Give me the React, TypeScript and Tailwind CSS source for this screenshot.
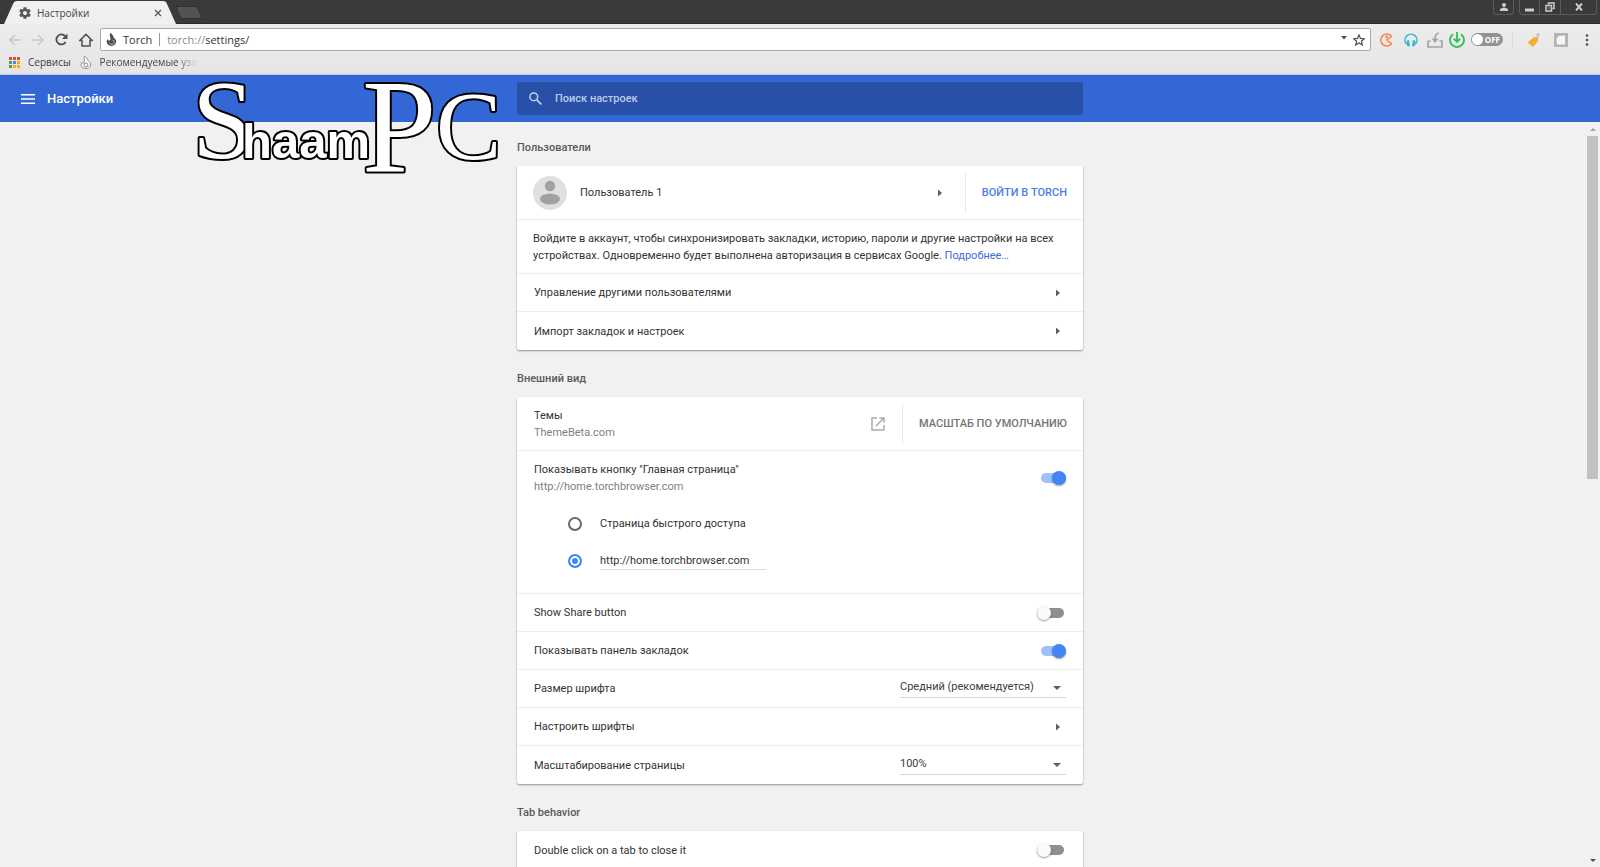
import React, { useState } from "react";

function Chevron() {
  return (
    <svg width="4" height="8" viewBox="0 0 4 8" className="shrink-0" aria-hidden="true">
      <path d="M0 0.5L4 4L0 7.5z" fill="#5f5f5f" />
    </svg>
  );
}

function Toggle({ label, initial }: { label: string; initial: boolean }) {
  const [on, setOn] = useState(initial);
  return (
    <label className={on ? "relative block h-[14px] w-[25px]" : "relative mr-[2px] block h-[14px] w-[27px]"}>
      <input type="checkbox" aria-label={label} checked={on} onChange={() => setOn(!on)} className="peer absolute inset-0 z-10 m-0 cursor-pointer opacity-0" />
      <span className="absolute top-[2px] right-0 left-0 h-[10px] rounded-full bg-[#8f8f8f] peer-checked:bg-[#a0c0f9]" />
      <span className="absolute top-0 left-0 h-[14px] w-[14px] rounded-full bg-[#fafafa] shadow-[0_1px_2px_rgba(0,0,0,0.4)] peer-checked:right-0 peer-checked:left-auto peer-checked:bg-[#4285f4]" />
    </label>
  );
}

function Select({ label, options }: { label: string; options: string[] }) {
  return (
    <div className="relative w-[166px]">
      <select aria-label={label} className="block h-[19px] w-full appearance-none border-b border-[#d4d4d4] bg-transparent p-0 pb-[2px] text-[11px] leading-4 text-[#3c3c3c] outline-none">
        {options.map((o) => (
          <option key={o}>{o}</option>
        ))}
      </select>
      <svg width="8" height="4" viewBox="0 0 8 4" className="pointer-events-none absolute top-[7px] right-[5px]" aria-hidden="true">
        <path d="M0 0h8L4 4z" fill="#5f5f5f" />
      </svg>
    </div>
  );
}

function Section({ title, children }: { title: string; children: React.ReactNode }) {
  return (
    <section>
      <h2 className="mb-[10px] text-[11px] leading-4 font-medium text-[#5a5a5a]">{title}</h2>
      <div className="divide-y divide-[#eeeeee] rounded-xs bg-white shadow-[0_1px_2px_rgba(0,0,0,0.4)]">{children}</div>
    </section>
  );
}

function Row({ label, children }: { label: string; children: React.ReactNode }) {
  return (
    <div className="flex h-[38px] items-center justify-between px-[17px]">
      <span>{label}</span>
      {children}
    </div>
  );
}

function LinkRow({ label }: { label: string }) {
  return (
    <button className="flex h-[38px] w-full items-center justify-between pr-[23px] pl-[17px] text-left">
      {label}
      <Chevron />
    </button>
  );
}

function WordMark() {
  return (
    <svg width="312" height="100" viewBox="0 0 312 100" className="pointer-events-none absolute top-[76px] left-[192px] z-20" role="img" aria-label="ShaamPC">
      <g fill="#fff" stroke="#000" strokeWidth="4" strokeLinejoin="round" paintOrder="stroke">
        <text x="244" y="83" fontFamily="Liberation Serif, serif" fontSize="98">C</text>
        <text x="170" y="95" fontFamily="Liberation Serif, serif" fontSize="134">P</text>
        <text x="0" y="82" fontFamily="Liberation Serif, serif" fontSize="112">S</text>
        <text x="50" y="82" fontFamily="Liberation Sans, sans-serif" fontWeight="bold" fontSize="49">haam</text>
      </g>
    </svg>
  );
}

function TitleBar() {
  return (
    <div className="flex h-6 items-end justify-between border-b border-[#2a2a2a] bg-[#3a3a3a]">
      <div className="flex items-end">
        <div className="relative -mb-px ml-1 flex h-[23px] w-[172px] items-center pr-[14px] pl-[14px]">
          <svg viewBox="0 0 172 23" className="absolute inset-0 h-full w-full" aria-hidden="true">
            <path d="M0 23L9 3Q10 0 13 0H159Q162 0 163 3L172 23z" fill="#f0f0f0" />
          </svg>
          <svg viewBox="0 0 24 24" width="14" height="14" className="relative" aria-hidden="true">
            <path fill="#555" d="M19.43 12.98c.04-.32.07-.64.07-.98s-.03-.66-.07-.98l2.11-1.65c.19-.15.24-.42.12-.64l-2-3.46c-.12-.22-.39-.3-.61-.22l-2.49 1c-.52-.4-1.08-.73-1.69-.98l-.38-2.65C14.46 2.18 14.25 2 14 2h-4c-.25 0-.46.18-.49.42l-.38 2.65c-.61.25-1.17.59-1.69.98l-2.49-1c-.23-.09-.49 0-.61.22l-2 3.46c-.13.22-.07.49.12.64l2.11 1.65c-.04.32-.07.65-.07.98s.03.66.07.98l-2.11 1.65c-.19.15-.24.42-.12.64l2 3.46c.12.22.39.3.61.22l2.49-1c.52.4 1.08.73 1.69.98l.38 2.65c.03.24.24.42.49.42h4c.25 0 .46-.18.49-.42l.38-2.65c.61-.25 1.17-.59 1.69-.98l2.49 1c.23.09.49 0 .61-.22l2-3.46c.12-.22.07-.49-.12-.64l-2.11-1.65zM12 15.5c-1.93 0-3.5-1.57-3.5-3.5s1.57-3.5 3.5-3.5 3.5 1.57 3.5 3.5-1.57 3.5-3.5 3.5z" />
          </svg>
          <span className="relative ml-[5px] flex-1 text-[10px] leading-4 text-[#444]">Настройки</span>
          <button aria-label="Закрыть вкладку" className="relative">
            <svg width="8" height="8" viewBox="0 0 8 8" aria-hidden="true">
              <path d="M1 1l6 6M7 1L1 7" stroke="#555" strokeWidth="1.3" />
            </svg>
          </button>
        </div>
        <button aria-label="Новая вкладка" className="-ml-px mb-[4px]">
          <svg width="28" height="13" viewBox="0 0 28 13" aria-hidden="true">
            <path d="M1 0.5H20Q22 0.5 23 2L27 12.5H8Q6 12.5 5 11z" fill="#535353" stroke="#303030" />
          </svg>
        </button>
      </div>
      <div className="mr-[3px] flex self-start">
        <button aria-label="Профиль" className="mr-[5px] flex h-[15px] w-[21px] items-center justify-center rounded-b border border-t-0 border-[#5c5c5c]">
          <svg width="8" height="8" viewBox="0 0 8 8" fill="#ccc" aria-hidden="true"><circle cx="4" cy="2" r="2" /><path d="M0 8V6Q4 3 8 6V8z" /></svg>
        </button>
        <button aria-label="Свернуть" className="flex h-[15px] w-[21px] items-center justify-center rounded-bl border border-t-0 border-[#5c5c5c]">
          <svg width="9" height="9" viewBox="0 0 9 9" aria-hidden="true"><path d="M0 5.5H9V8.5H0z" fill="#ccc" /></svg>
        </button>
        <button aria-label="Развернуть" className="flex h-[15px] w-[20px] items-center justify-center border-b border-[#5c5c5c]">
          <svg width="10" height="10" viewBox="0 0 10 10" fill="none" stroke="#ccc" strokeWidth="1.5" aria-hidden="true"><path d="M3.5 2.5V1H9V6.5H7.5M1 3.5H6.5V9H1zM3.5 6H4.5" /></svg>
        </button>
        <button aria-label="Закрыть" className="flex h-[15px] w-[37px] items-center justify-center rounded-br border border-t-0 border-[#5c5c5c]">
          <svg width="8" height="8" viewBox="0 0 8 8" aria-hidden="true"><path d="M1 0.5L7 7.5M7 0.5L1 7.5" stroke="#ccc" strokeWidth="2" /></svg>
        </button>
      </div>
    </div>
  );
}

function Toolbar() {
  return (
    <div className="flex h-[29px] items-center pt-[2px] pr-[11px] pl-[9px]">
      <div className="flex items-center gap-[11px] pr-[7px]">
        <button aria-label="Назад"><svg width="12" height="12" viewBox="0 0 12 12" fill="none" stroke="#c8c8c8" strokeWidth="1.6" aria-hidden="true"><path d="M12 6H1M6 1L1 6L6 11" /></svg></button>
        <button aria-label="Вперёд"><svg width="12" height="12" viewBox="0 0 12 12" fill="none" stroke="#c8c8c8" strokeWidth="1.6" aria-hidden="true"><path d="M0 6H11M6 1L11 6L6 11" /></svg></button>
        <button aria-label="Обновить"><svg width="13" height="13" viewBox="0 0 13 13" aria-hidden="true"><path d="M10.7 9A5 5 0 1 1 10.2 3.2" fill="none" stroke="#505050" strokeWidth="1.8" /><path d="M12.5 0.5V6H7z" fill="#505050" /></svg></button>
        <button aria-label="Домой"><svg width="14" height="14" viewBox="0 0 14 14" fill="none" stroke="#505050" strokeWidth="1.5" aria-hidden="true"><path d="M0.8 7.6L7 1.3L13.2 7.6H11V13H3V7.6z" /></svg></button>
      </div>
      <div className="flex h-[23px] flex-1 items-center rounded-xs border border-[#a9a9a9] bg-white pr-[5px] pl-[5px] text-[11px]">
        <svg width="11" height="13" viewBox="0 0 12 14" aria-hidden="true">
          <path d="M4.500 0C9 2 7 4.500 9.500 6C13 9 10 14 6 14C1.500 14 -1 9 2 6.500C2 8 3 8.500 4 8C6.500 6 3 3 4.500 0z" fill="#4d4d4d" />
          <path d="M4 10.500A2.500 2.500 0 1 0 7 7.500" fill="none" stroke="#bbb" />
        </svg>
        <span className="ml-[6px] text-[#333]">Torch</span>
        <span className="mx-[7px] h-[13px] w-px bg-[#999]" />
        <label className="flex flex-1 items-center">
          <span className="text-[#8a8a8a]">torch://</span>
          <input aria-label="Адресная строка" defaultValue="settings/" className="min-w-0 flex-1 bg-transparent p-0 text-[#333] outline-none" />
        </label>
        <svg width="6" height="4" viewBox="0 0 6 4" className="mr-[6px] mb-[3px]" aria-hidden="true"><path d="M0 0h6L3 3.5z" fill="#555" /></svg>
        <button aria-label="Добавить в закладки"><svg width="12" height="12" viewBox="0 0 12 12" aria-hidden="true"><path d="M6 0.9L7.5 4.4L11.3 4.7L8.4 7.2L9.3 11L6 9L2.7 11L3.6 7.2L0.7 4.7L4.500 4.4z" fill="none" stroke="#505050" strokeWidth="1.2" /></svg></button>
      </div>
      <div className="ml-[8px] flex items-center">
        <button aria-label="Игры" className="mr-[11px]"><svg width="14" height="14" viewBox="0 0 14 14" fill="none" stroke="#f58345" strokeWidth="1.5" aria-hidden="true"><path d="M12.5 3.3A6 6 0 1 0 12.5 10.7L7.5 7z" strokeLinejoin="round" /><circle cx="7.6" cy="3.8" r="0.6" /></svg></button>
        <button aria-label="Музыка" className="mr-[9px]"><svg width="14" height="14" viewBox="0 0 14 14" aria-hidden="true"><path d="M2 10.5A6 6 0 1 1 12 10.5" fill="none" stroke="#37b6d3" strokeWidth="1.5" /><path d="M3 7.5L5 7L6 13L4 13.5L2 11zM11 7.5L9 7L8 13L10 13.5L12 11z" fill="#37b6d3" /></svg></button>
        <button aria-label="Загрузки" className="mr-[6px]"><svg width="16" height="16" viewBox="0 0 16 16" fill="none" stroke="#a3a3a3" strokeWidth="1.6" aria-hidden="true"><path d="M1 9V15H15V9H12.500M1 9H3.500M12 1Q8 1.500 8 7" /><path d="M4.500 6.500H11.500L8 11z" fill="#a3a3a3" stroke="none" /></svg></button>
        <button aria-label="Торрент" className="mr-[6px]"><svg width="16" height="16" viewBox="0 0 16 16" fill="none" stroke="#2bc150" strokeWidth="1.8" aria-hidden="true"><path d="M4 2.300A7 7 0 1 0 12 2.300M8 0V9M4.800 6.700L8 10L11.200 6.700" /></svg></button>
        <button className="flex h-[13px] w-[32px] items-center justify-between rounded-full bg-[#929292] pr-[3px] pl-px text-[8px] leading-none font-bold text-white"><span className="h-[11px] w-[11px] rounded-full bg-white" />OFF</button>
        <span className="mr-[14px] ml-[9px] h-[16px] w-px bg-[#d8d8d8]" />
        <button aria-label="Купоны" className="mr-[14px]"><svg width="13" height="14" viewBox="0 0 13 14" aria-hidden="true"><path d="M7 4L11 4.500L11 8L6 14L0.500 9.500z" fill="#f8ad35" /><path d="M9.500 6L12 1.500Q12 0 10.500 1L9.500 3" fill="none" stroke="#aaa" /></svg></button>
        <button aria-label="Расширение" className="mr-[17px]"><svg width="14" height="14" viewBox="0 0 14 14" aria-hidden="true"><path d="M0 0H14V14H0z" fill="#b5b5b5" /><path d="M4.500 3L11 2.500V11.500H3L2.500 6z" fill="#f7f7f7" /></svg></button>
        <button aria-label="Меню"><svg width="4" height="12" viewBox="0 0 4 12" fill="#505050" aria-hidden="true"><circle cx="2" cy="1.500" r="1.300" /><circle cx="2" cy="6" r="1.300" /><circle cx="2" cy="10.500" r="1.300" /></svg></button>
      </div>
    </div>
  );
}

const dots = ["#dd4b39", "#dd4b39", "#dd4b39", "#3aa757", "#4285f4", "#f4b400", "#3aa757", "#f4b400", "#f4b400"];

function Bookmarks() {
  return (
    <nav className="flex h-[22px] items-center border-b border-[#c4c9d4] pb-[3px] pl-[9px] text-[10px] text-[#404040]">
      <a href="#apps" className="flex items-center gap-[8px]">
        <svg width="11" height="11" viewBox="0 0 11 11" aria-hidden="true">
          {dots.map((c, i) => (
            <rect key={i} x={(i % 3) * 4} y={Math.floor(i / 3) * 4} width="3" height="3" fill={c} />
          ))}
        </svg>
        Сервисы
      </a>
      <a href="#sites" className="ml-[9px] flex items-center gap-[8px]">
        <svg width="12" height="13" viewBox="0 0 12 13" fill="none" stroke="#8a8a8a" aria-hidden="true">
          <path d="M4.500 0.500C8 2 7 4 9 5.500C13 8.500 9.500 12.500 6 12.500C1.500 12.500 0 9 2 6.500C3 8 4.500 7 4.500 5C4.500 3 3.500 2 4.500 0.500z" fill="#fff" />
          <circle cx="6" cy="9" r="2" />
        </svg>
        <span className="bg-linear-to-r from-[#404040] from-80% to-transparent bg-clip-text whitespace-nowrap text-transparent">Рекомендуемые узл</span>
      </a>
    </nav>
  );
}

export default function App() {
  const [home, setHome] = useState("url");
  return (
    <div className="relative flex h-screen flex-col overflow-hidden bg-[#f1f1f1] font-['Roboto',sans-serif] text-[11px] leading-[17px] text-[#333]">
      <header className="shrink-0 bg-linear-to-b from-[#f0f0f0] to-[#e5e5e5] font-['Open_Sans',sans-serif]">
        <TitleBar />
        <Toolbar />
        <Bookmarks />
      </header>
      <WordMark />
      <div className="grid h-[47px] shrink-0 grid-cols-[1fr_566px_1fr] items-center bg-[#3367d6]">
        <div className="flex items-center gap-[12px] pl-[21px]">
          <button aria-label="Меню настроек"><svg width="14" height="10" viewBox="0 0 14 10" fill="#fff" aria-hidden="true"><path d="M0 0H14V1.600H0zM0 4.200H14V5.800H0zM0 8.400H14V10H0z" /></svg></button>
          <h1 className="text-[13px] font-medium text-white">Настройки</h1>
        </div>
        <label className="flex h-[33px] items-center rounded-xs bg-[#2850a7] pl-[12px]">
          <svg width="13" height="13" viewBox="0 0 13 13" fill="none" stroke="#c2cfea" aria-hidden="true"><circle cx="4.800" cy="4.800" r="3.900" strokeWidth="1.5" /><path d="M7.800 7.800L12.300 12.300" strokeWidth="1.7" /></svg>
          <input aria-label="Поиск настроек" placeholder="Поиск настроек" className="ml-[13px] flex-1 bg-transparent p-0 font-medium text-white outline-none placeholder:text-[#bccbea]" />
        </label>
      </div>
      <main className="min-h-0 flex-1 overflow-hidden">
        <div className="mx-auto flex max-w-[566px] flex-col gap-[21px] pt-[18px]">
          <Section title="Пользователи">
            <div className="flex h-[54px] items-center pl-[16px]">
              <svg width="34" height="34" viewBox="0 0 34 34" aria-hidden="true"><circle cx="17" cy="17" r="17" fill="#e0e0e0" /><circle cx="17" cy="10" r="5.200" fill="#a1a1a1" /><ellipse cx="17" cy="23" rx="10" ry="5.500" fill="#a1a1a1" /></svg>
              <button className="ml-[13px] flex flex-1 items-center justify-between pr-[23px] text-left">Пользователь 1<Chevron /></button>
              <button className="h-[40px] border-l border-[#ebebeb] px-[16px] font-medium text-[#4a7de8]">ВОЙТИ В TORCH</button>
            </div>
            <p className="flex h-[54px] items-center px-[16px]">
              <span>Войдите в аккаунт, чтобы синхронизировать закладки, историю, пароли и другие настройки на всех устройствах. Одновременно будет выполнена авторизация в сервисах Google. <a href="#more" className="text-[#3f6ad8]">Подробнее…</a></span>
            </p>
            <LinkRow label="Управление другими пользователями" />
            <LinkRow label="Импорт закладок и настроек" />
          </Section>
          <Section title="Внешний вид">
            <div className="flex h-[54px] items-center pl-[17px]">
              <div className="flex-1"><div>Темы</div><div className="text-[#808080]">ThemeBeta.com</div></div>
              <button aria-label="Открыть темы" className="mr-[17px]"><svg width="14" height="14" viewBox="0 0 14 14" fill="none" stroke="#aaa" strokeWidth="1.5" aria-hidden="true"><path d="M6 1H1V13H13V8M8.500 1H13V5.500M13 1L5 9" /></svg></button>
              <button className="h-[40px] border-l border-[#ebebeb] px-[16px] font-medium text-[#757575]">МАСШТАБ ПО УМОЛЧАНИЮ</button>
            </div>
            <div className="h-[143px]">
              <div className="flex h-[54px] items-center justify-between px-[17px]">
                <div><div>Показывать кнопку "Главная страница"</div><div className="text-[#808080]">http://home.torchbrowser.com</div></div>
                <Toggle label="Показывать кнопку Главная страница" initial={true} />
              </div>
              <div className="flex h-[37px] items-center gap-[18px] pl-[51px]">
                <input id="ntp" type="radio" name="home" checked={home === "ntp"} onChange={() => setHome("ntp")} className="m-0 h-[14px] w-[14px] appearance-none rounded-full border-2 border-[#6a6a6a] checked:border-[#4285f4] checked:bg-[#4285f4] checked:shadow-[inset_0_0_0_2px_#fff]" />
                <label htmlFor="ntp">Страница быстрого доступа</label>
              </div>
              <div className="flex h-[37px] items-center gap-[18px] pl-[51px]">
                <input aria-label="Указать адрес" type="radio" name="home" checked={home === "url"} onChange={() => setHome("url")} className="m-0 h-[14px] w-[14px] appearance-none rounded-full border-2 border-[#6a6a6a] checked:border-[#4285f4] checked:bg-[#4285f4] checked:shadow-[inset_0_0_0_2px_#fff]" />
                <input aria-label="Адрес главной страницы" defaultValue="http://home.torchbrowser.com" className="h-[19px] w-[166px] border-b border-[#dcdcdc] bg-transparent p-0 outline-none" />
              </div>
            </div>
            <Row label="Show Share button"><Toggle label="Show Share button" initial={false} /></Row>
            <Row label="Показывать панель закладок"><Toggle label="Показывать панель закладок" initial={true} /></Row>
            <Row label="Размер шрифта"><Select label="Размер шрифта" options={["Средний (рекомендуется)", "Крупный"]} /></Row>
            <LinkRow label="Настроить шрифты" />
            <Row label="Масштабирование страницы"><Select label="Масштабирование страницы" options={["100%", "125%"]} /></Row>
          </Section>
          <Section title="Tab behavior">
            <Row label="Double click on a tab to close it"><Toggle label="Double click on a tab to close it" initial={false} /></Row>
          </Section>
        </div>
      </main>
      <div className="absolute top-[122px] right-0 bottom-0 flex w-[15px] flex-col items-center bg-[#f1f1f1]" aria-hidden="true">
        <svg width="6" height="14" viewBox="0 0 6 14"><path d="M0 9h6L3 6z" fill="#a3a3a3" /></svg>
        <div className="h-[343px] w-[11px] bg-[#c1c1c1]" />
        <svg width="6" height="14" viewBox="0 0 6 14" className="mt-auto"><path d="M0 6h6L3 9z" fill="#505050" /></svg>
      </div>
    </div>
  );
}
